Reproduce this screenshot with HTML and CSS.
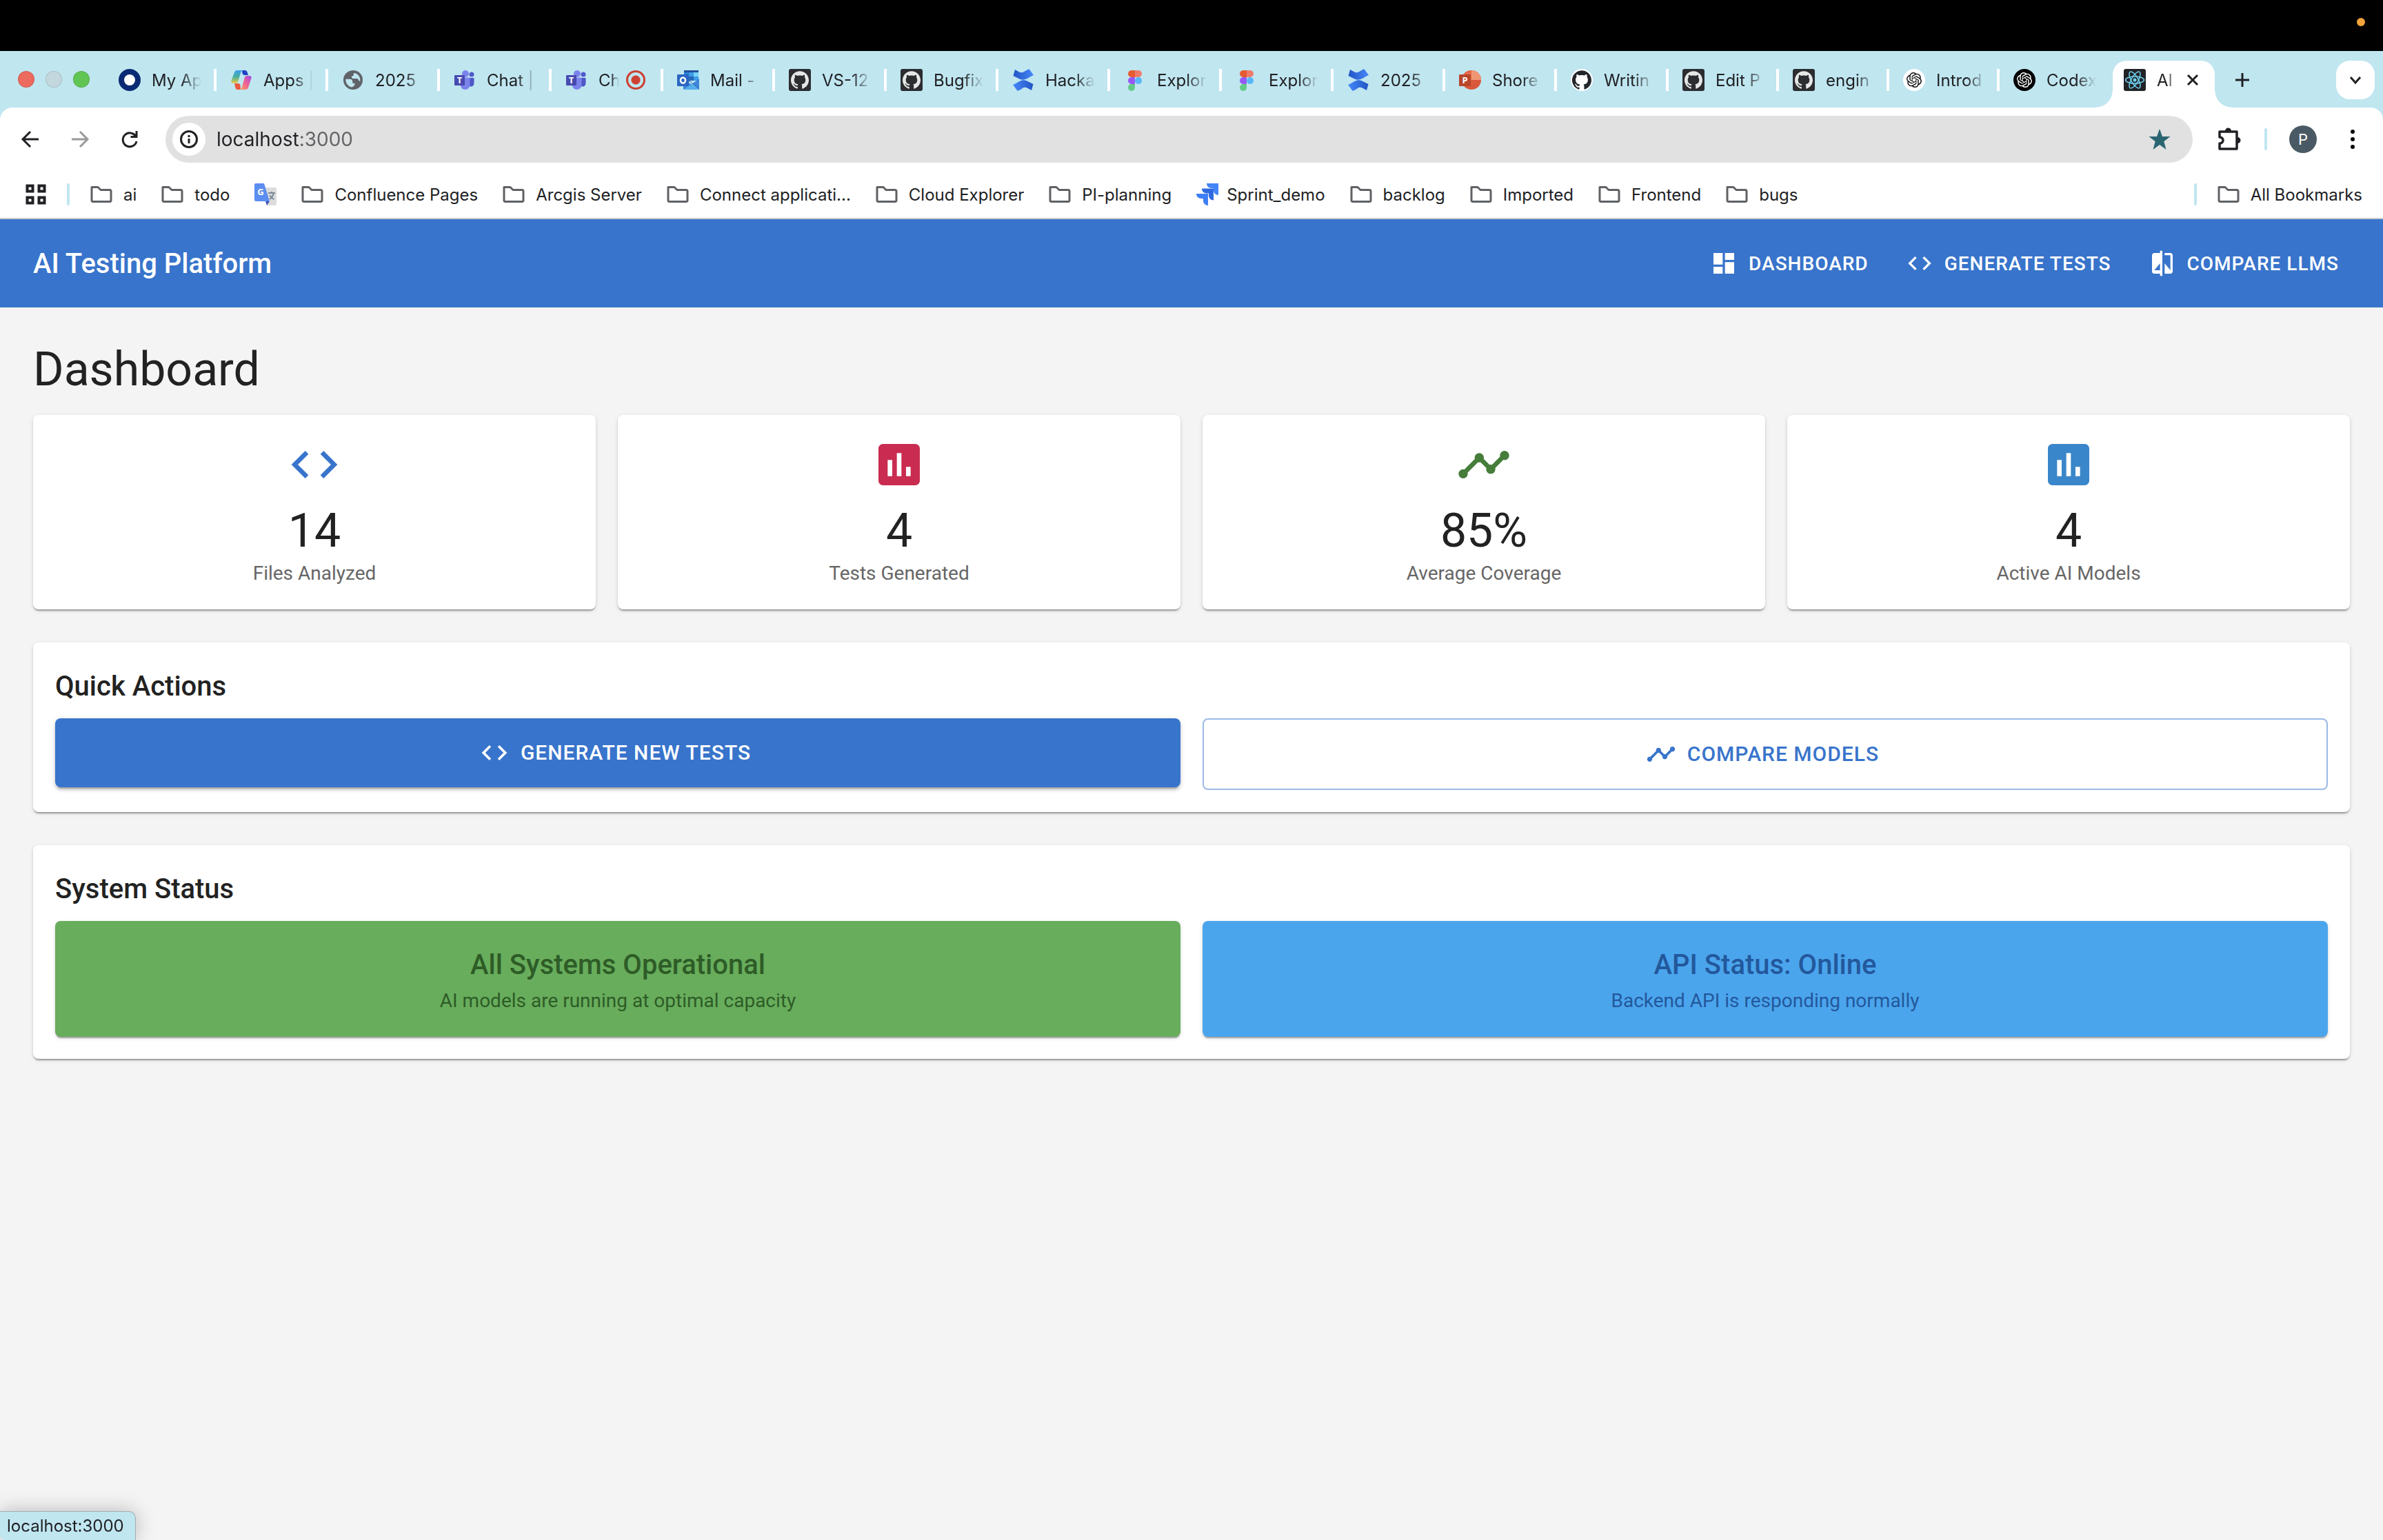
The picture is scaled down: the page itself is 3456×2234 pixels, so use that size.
FILE: index.html
```html
<!DOCTYPE html>
<html lang="en">
<head>
    <meta charset="UTF-8">
    <meta name="viewport" content="width=device-width, initial-scale=1.0">
    <title>AI Testing Platform</title>
    <link rel="stylesheet" href="styles.css">
</head>
<body>
    <!-- icon sprite -->
    <svg class="sprite" aria-hidden="true">
        <defs>
            <linearGradient id="conf-grad" x1="0" y1="0" x2="1" y2="0">
                <stop offset="0" stop-color="#2255c4"/>
                <stop offset="1" stop-color="#4688fa"/>
            </linearGradient>
            <linearGradient id="conf-grad-b" x1="1" y1="0" x2="0" y2="0">
                <stop offset="0" stop-color="#2255c4"/>
                <stop offset="1" stop-color="#4688fa"/>
            </linearGradient>
            <linearGradient id="cop-left" x1="0" y1="0" x2="0" y2="1">
                <stop offset="0" stop-color="#3f9cf0"/>
                <stop offset="0.5" stop-color="#45b0a0"/>
                <stop offset="1" stop-color="#e8c93e"/>
            </linearGradient>
            <linearGradient id="cop-right" x1="1" y1="0" x2="0" y2="1">
                <stop offset="0" stop-color="#a04de8"/>
                <stop offset="0.5" stop-color="#ef6292"/>
                <stop offset="1" stop-color="#f9a65c"/>
            </linearGradient>
        </defs>
        <symbol id="code" viewBox="0 0 24 24"><path d="M9.4 16.6 4.8 12l4.6-4.6L8 6l-6 6 6 6zm5.2 0 4.6-4.6-4.6-4.6L16 6l6 6-6 6z"/></symbol>
        <symbol id="assessment" viewBox="0 0 24 24"><path d="M19 3H5c-1.1 0-2 .9-2 2v14c0 1.1.9 2 2 2h14c1.1 0 2-.9 2-2V5c0-1.1-.9-2-2-2M9 17H7v-7h2zm4 0h-2V7h2zm4 0h-2v-4h2z"/></symbol>
        <symbol id="timeline" viewBox="0 0 24 24"><path d="M23 8c0 1.1-.9 2-2 2-.18 0-.35-.02-.51-.07l-3.56 3.55c.05.16.07.34.07.52 0 1.1-.9 2-2 2s-2-.9-2-2c0-.18.02-.36.07-.52l-2.55-2.55c-.16.05-.34.07-.52.07s-.36-.02-.52-.07l-4.55 4.56c.05.16.07.33.07.51 0 1.1-.9 2-2 2s-2-.9-2-2 .9-2 2-2c.18 0 .35.02.51.07l4.56-4.55C8.02 9.36 8 9.18 8 9c0-1.1.9-2 2-2s2 .9 2 2c0 .18-.02.36-.07.52l2.55 2.55c.16-.05.34-.07.52-.07s.36.02.52.07l3.55-3.56C19.02 8.35 19 8.18 19 8c0-1.1.9-2 2-2s2 .9 2 2"/></symbol>
        <symbol id="dashboard" viewBox="0 0 24 24"><path d="M3 13h8V3H3zm0 8h8v-6H3zm10 0h8V11h-8zm0-18v6h8V3z"/></symbol>
        <symbol id="compare" viewBox="0 0 24 24"><path d="M10 3H5c-1.1 0-2 .9-2 2v14c0 1.1.9 2 2 2h5v2h2V1h-2zm0 15H5l5-6zm9-15h-5v2h5v13l-5-6v9h5c1.1 0 2-.9 2-2V5c0-1.1-.9-2-2-2"/></symbol>

        <symbol id="folder" viewBox="0 0 32 32"><path d="M2 5.500h9l4 4h13a2 2 0 0 1 2 2V25a1.500 1.500 0 0 1-1.500 1.500h-25A1.500 1.500 0 0 1 2 25z" fill="none" stroke="#5f6164" stroke-width="3" stroke-linejoin="round"/></symbol>
        <symbol id="okta" viewBox="0 0 32 32"><circle cx="16" cy="16" r="12" fill="#fff" stroke="#0b2a74" stroke-width="8"/></symbol>
        <symbol id="copilot" viewBox="0 0 32 32">
            <path d="M17 2h4.500c1.500 0 2.500 1 3 2.500L26 9h-5c-2 0-3-1-3.500-2.500z" fill="#2142c4"/>
            <path d="M10 2h9c-2 0-3 1-3.500 2.500L11 18.500C10.500 20 9.500 20.500 8 20.500H4C1.500 20.500 1 18.500 1.500 17L6 5c.7-2 2-3 4-3z" fill="url(#cop-left)"/>
            <path d="M15 30h-4.500c-1.500 0-2.500-1-3-2.500L6 21h5c2 0 3 1 3.500 2.500z" fill="#ea5a3c"/>
            <path d="M22 30h-9c2 0 3-1 3.500-2.500L21 12c.5-1.500 1.500-2 3-2h4c2.500 0 3 2 2.500 3.500L26 27c-.7 2-2 3-4 3z" fill="url(#cop-right)"/>
        </symbol>
        <symbol id="globe" viewBox="0 0 24 24">
            <circle cx="12" cy="12" r="10.500" fill="#5f6368"/>
            <path d="M4 11h4.500a3 3 0 0 1 3 3v1.500H14a4.500 4.500 0 0 1-4 4.300A8 8 0 0 1 4 12zm9.500-6.700a8 8 0 0 1 6.200 9c-.7 0-1.400-.4-1.800-1.300-.5-1.300-1-1.500-2.400-1.500H12c-1 0-1.500-.8-1.500-1.700 0-1 .7-1.300 1.500-1.300h.5V6c0-.8.500-1.300 1-1.700z" fill="#c0e6f0"/>
        </symbol>
        <symbol id="teams" viewBox="0 0 32 32">
            <circle cx="26" cy="8" r="3.500" fill="#5059c9"/>
            <path d="M20 13h9.500v7.500c0 3-2 5-4.500 5s-5-2-5-5z" fill="#4f57c8"/>
            <circle cx="17" cy="7" r="5" fill="#7b83eb"/>
            <path d="M10 12.500h13.500V23c0 4-3 7-7 7s-6.500-3-6.500-7z" fill="#7b83eb"/>
            <rect x="1" y="9" width="15" height="15" rx="1" fill="#474ab0"/>
        </symbol>
        <symbol id="outlook" viewBox="0 0 32 32">
            <path d="M10 2h20a1 1 0 0 1 1 1v14H10z" fill="#2b7fd8"/>
            <path d="M10 2h21v3H10z" fill="#23509c"/>
            <path d="M17 5h7v6h-7z" fill="#3c9be6"/><path d="M24 5h7v6h-7z" fill="#74d3fa"/>
            <path d="M17 11h7v6h-7z" fill="#2667b8"/><path d="M24 11h7v6h-7z" fill="#3c9be6"/>
            <path d="M9 17l12 5 11-8v16H9z" fill="#3f86dc"/>
            <path d="M9 30l12-8h2l9 8z" fill="#56aeea"/>
            <path d="M16 17l5 3 11 9v-1L18 17z" fill="#235ba5"/>
            <rect x="0" y="8" width="17" height="17" rx="1" fill="#2a66c2"/>
            <ellipse cx="8.500" cy="16.500" rx="3.500" ry="4" fill="none" stroke="#fff" stroke-width="2.500"/>
        </symbol>
        <symbol id="octocat" viewBox="0 0 24 24"><path d="M12 .297c-6.63 0-12 5.373-12 12 0 5.303 3.438 9.8 8.205 11.385.6.113.82-.258.82-.577 0-.285-.01-1.04-.015-2.04-3.338.724-4.042-1.61-4.042-1.61C4.422 18.07 3.633 17.7 3.633 17.7c-1.087-.744.084-.729.084-.729 1.205.084 1.838 1.236 1.838 1.236 1.07 1.835 2.809 1.305 3.495.998.108-.776.417-1.305.76-1.605-2.665-.3-5.466-1.332-5.466-5.93 0-1.31.465-2.38 1.235-3.22-.135-.303-.54-1.523.105-3.176 0 0 1.005-.322 3.3 1.23.96-.267 1.98-.399 3-.405 1.02.006 2.04.138 3 .405 2.28-1.552 3.285-1.23 3.285-1.23.645 1.653.24 2.873.12 3.176.765.84 1.23 1.91 1.23 3.22 0 4.61-2.805 5.625-5.475 5.92.42.36.81 1.096.81 2.22 0 1.606-.015 2.896-.015 3.286 0 .315.21.69.825.57C20.565 22.092 24 17.592 24 12.297c0-6.627-5.373-12-12-12"/></symbol>
        <symbol id="github-dark" viewBox="0 0 32 32">
            <rect width="32" height="32" rx="3" fill="#2b2d30"/>
            <use href="#octocat" x="3" y="3" width="26" height="26" fill="#e6e6e6"/>
        </symbol>
        <symbol id="github" viewBox="0 0 32 32">
            <circle cx="16" cy="16" r="16" fill="#fff"/>
            <use href="#octocat" x="2" y="2" width="28" height="28" fill="#22262b"/>
        </symbol>
        <symbol id="confluence" viewBox="0 0 32 32">
            <path d="M4 1l5.500 3c3 1.700 5 1.700 8-.2C20 2.200 22 .8 24.500.200L31 9c-4 1.500-7 4-10.500 5.500-4 1.700-7 1.500-11-.5L1.500 10z" fill="url(#conf-grad)"/>
            <path d="M28 31l-5.500-3c-3-1.700-5-1.700-8 .2C12 29.800 10 31.200 7.500 31.800L1 23c4-1.500 7-4 10.500-5.500 4-1.700 7-1.500 11 .5l8 4z" fill="url(#conf-grad-b)"/>
        </symbol>
        <symbol id="figma" viewBox="0 0 32 32">
            <path d="M11 2h5v10h-5a5 5 0 0 1 0-10z" fill="#e55b32"/>
            <path d="M16 2h5a5 5 0 0 1 0 10h-5z" fill="#ef7b6b"/>
            <path d="M11 12h5v10h-5a5 5 0 0 1 0-10z" fill="#9759f6"/>
            <circle cx="21" cy="17" r="5" fill="#58b7f8"/>
            <path d="M11 22h5v5a5 5 0 1 1-5-5z" fill="#62cb86"/>
        </symbol>
        <symbol id="powerpoint" viewBox="0 0 32 32">
            <circle cx="18" cy="16" r="14" fill="#d9583a"/>
            <path d="M18 2a14 14 0 0 1 14 14H18z" fill="#f19673"/>
            <path d="M18 2a14 14 0 0 0-14 14h14z" fill="#e6694a"/>
            <rect x="0" y="8" width="17" height="17" rx="1" fill="#b9472b"/>
        </symbol>
        <symbol id="openai-mark" viewBox="0 0 24 24"><path d="M22.2819 9.8211a5.9847 5.9847 0 0 0-.5157-4.9108 6.0462 6.0462 0 0 0-6.5098-2.9A6.0651 6.0651 0 0 0 4.9807 4.1818a5.9847 5.9847 0 0 0-3.9977 2.9 6.0462 6.0462 0 0 0 .7427 7.0966 5.98 5.98 0 0 0 .511 4.9107 6.051 6.051 0 0 0 6.5146 2.9001A5.9847 5.9847 0 0 0 13.2599 24a6.0557 6.0557 0 0 0 5.7718-4.2058 5.9894 5.9894 0 0 0 3.9977-2.9001 6.0557 6.0557 0 0 0-.7475-7.0729zm-9.022 12.6081a4.4755 4.4755 0 0 1-2.8764-1.0408l.1419-.0804 4.7783-2.7582a.7948.7948 0 0 0 .3927-.6813v-6.7369l2.02 1.1686a.071.071 0 0 1 .038.052v5.5826a4.504 4.504 0 0 1-4.4945 4.4944zm-9.6607-4.1254a4.4708 4.4708 0 0 1-.5346-3.0137l.142.0852 4.783 2.7582a.7712.7712 0 0 0 .7806 0l5.8428-3.3685v2.3324a.0804.0804 0 0 1-.0332.0615L9.74 19.9502a4.4992 4.4992 0 0 1-6.1408-1.6464zM2.3408 7.8956a4.485 4.485 0 0 1 2.3655-1.9728V11.6a.7664.7664 0 0 0 .3879.6765l5.8144 3.3543-2.0201 1.1685a.0757.0757 0 0 1-.071 0l-4.8303-2.7865A4.504 4.504 0 0 1 2.3408 7.872zm16.5963 3.8558L13.1038 8.364 15.1192 7.2a.0757.0757 0 0 1 .071 0l4.8303 2.7913a4.4944 4.4944 0 0 1-.6765 8.1042v-5.6772a.79.79 0 0 0-.407-.667zm2.0107-3.0231l-.142-.0852-4.7735-2.7818a.7759.7759 0 0 0-.7854 0L9.409 9.2297V6.8974a.0662.0662 0 0 1 .0284-.0615l4.8303-2.7866a4.4992 4.4992 0 0 1 6.6802 4.66zM8.3065 12.863l-2.02-1.1638a.0804.0804 0 0 1-.038-.0567V6.0742a4.4992 4.4992 0 0 1 7.3757-3.4537l-.142.0805L8.704 5.459a.7948.7948 0 0 0-.3927.6813zm1.0976-2.3654l2.602-1.4998 2.6069 1.4998v2.9994l-2.5974 1.4997-2.6067-1.4997Z"/></symbol>
        <symbol id="openai" viewBox="0 0 32 32">
            <circle cx="16" cy="16" r="16" fill="#fff"/>
            <use href="#openai-mark" x="5" y="5" width="22" height="22" fill="#111"/>
        </symbol>
        <symbol id="openai-dark" viewBox="0 0 32 32">
            <circle cx="16" cy="16" r="16" fill="#000"/>
            <use href="#openai-mark" x="5" y="5" width="22" height="22" fill="#fff"/>
        </symbol>
        <symbol id="react" viewBox="0 0 32 32">
            <rect width="32" height="32" rx="3" fill="#222326"/>
            <g fill="none" stroke="#6fd3f2" stroke-width="1.500">
                <ellipse cx="16" cy="16" rx="13.500" ry="5"/>
                <ellipse cx="16" cy="16" rx="13.500" ry="5" transform="rotate(60 16 16)"/>
                <ellipse cx="16" cy="16" rx="13.500" ry="5" transform="rotate(120 16 16)"/>
            </g>
            <circle cx="16" cy="16" r="2.500" fill="#6fd3f2"/>
        </symbol>
        <symbol id="translate" viewBox="0 0 32 32">
            <path d="M14 6h16a2 2 0 0 1 2 2v22a2 2 0 0 1-2 2H18z" fill="#dcdcdc"/>
            <path d="M16 26h6l-4 6z" fill="#4150b5"/>
            <path d="M2 0h12l8 26H2a2 2 0 0 1-2-2V2a2 2 0 0 1 2-2z" fill="#5c8df0"/>
            <path d="M20 14h10M25 12v2M28 14c-1 4-3 7-6 9M22.500 17c1 3 3 5 6 6" fill="none" stroke="#7a8a96" stroke-width="2"/>
        </symbol>
        <symbol id="jira" viewBox="0 0 32 32">
            <path d="M15 0h17v17c-4 0-7-3-7-7V7h-3c-4 0-7-3-7-7z" fill="#4384f8"/>
            <path d="M8 7.500h17v17c-4 0-7-3-7-7v-3h-3c-4 0-7-3-7-7z" fill="#316ae0"/>
            <path d="M0 15h17v17c-4 0-7-3-7-7v-3H7c-4 0-7-3-7-7z" fill="#3f7ff5"/>
        </symbol>
    </svg>

    <div class="menubar"><span class="mic-dot"></span></div>

    <div class="tabstrip">
        <div class="lights"><span class="light red"></span><span class="light grey"></span><span class="light green"></span></div>
        <nav class="tabs">
            <a href="#" class="tab"><svg><use href="#okta"/></svg><span>My Ap</span></a>
            <a href="#" class="tab"><svg><use href="#copilot"/></svg><span>Apps |</span></a>
            <a href="#" class="tab"><svg><use href="#globe"/></svg><span>2025</span></a>
            <a href="#" class="tab"><svg><use href="#teams"/><text x="8.500" y="21" class="glyph">T</text></svg><span>Chat |</span></a>
            <a href="#" class="tab recording"><svg><use href="#teams"/><text x="8.500" y="21" class="glyph">T</text></svg><span>Ch</span><i class="rec"></i></a>
            <a href="#" class="tab"><svg><use href="#outlook"/></svg><span>Mail -</span></a>
            <a href="#" class="tab"><svg><use href="#github-dark"/></svg><span>VS-12</span></a>
            <a href="#" class="tab"><svg><use href="#github-dark"/></svg><span>Bugfix</span></a>
            <a href="#" class="tab"><svg><use href="#confluence"/></svg><span>Hacka</span></a>
            <a href="#" class="tab"><svg><use href="#figma"/></svg><span>Explor</span></a>
            <a href="#" class="tab"><svg><use href="#figma"/></svg><span>Explor</span></a>
            <a href="#" class="tab"><svg><use href="#confluence"/></svg><span>2025</span></a>
            <a href="#" class="tab"><svg><use href="#powerpoint"/><text x="8.500" y="21" class="glyph">P</text></svg><span>Shore</span></a>
            <a href="#" class="tab"><svg><use href="#github"/></svg><span>Writin</span></a>
            <a href="#" class="tab narrow"><svg><use href="#github-dark"/></svg><span>Edit P</span></a>
            <a href="#" class="tab narrow"><svg><use href="#github-dark"/></svg><span>engin</span></a>
            <a href="#" class="tab narrow"><svg><use href="#openai"/></svg><span>Introd</span></a>
            <a href="#" class="tab narrow last"><svg><use href="#openai-dark"/></svg><span>Codex</span></a>
            <div class="tab-active">
                <svg><use href="#react"/></svg><span>AI</span>
                <button type="button" aria-label="Close tab"><svg viewBox="0 0 20 20"><path d="M3 3l14 14M17 3L3 17"/></svg></button>
            </div>
        </nav>
        <button type="button" class="new-tab" aria-label="New tab"><svg viewBox="0 0 20 20"><path d="M10 0v20M0 10h20"/></svg></button>
        <button type="button" class="tab-search" aria-label="Search tabs"><svg viewBox="0 0 20 20"><path d="M3 6l7 8 7-8"/></svg></button>
    </div>

    <div class="chrome">
        <div class="toolbar">
            <button type="button" class="tool" aria-label="Back"><svg viewBox="0 0 24 24"><path d="M24 12H2M12 1L1 12l11 11"/></svg></button>
            <button type="button" class="tool dim" aria-label="Forward"><svg viewBox="0 0 24 24"><path d="M0 12h22M12 1l11 11-11 11"/></svg></button>
            <button type="button" class="tool" aria-label="Reload"><svg viewBox="0 0 24 24"><path d="M21 8a10 10 0 1 0 1 7M22 0v8.500h-8.500"/></svg></button>
            <div class="omnibox">
                <span class="site-info"><svg viewBox="0 0 26 26"><circle cx="13" cy="13" r="11.500"/><path d="M13 12v7M13 7v3"/></svg></span>
                <input type="text" value="localhost:3000" aria-label="Address">
                <svg class="star" viewBox="0 0 32 32"><path d="M16 1l4 11h11.500l-9.200 7.200L25.500 31 16 24l-9.500 7 3.200-11.800L.5 12H12z"/></svg>
            </div>
            <button type="button" class="extensions" aria-label="Extensions"><svg viewBox="0 0 34 34"><path d="M3 6h25v25H3v-8c3 0 5-2 5-4.500S6 14 3 14z" fill="none" stroke="#202124" stroke-width="3.500" stroke-linejoin="round"/><path d="M11 5a4 4 0 0 1 9 0zM29 14a4.500 4.500 0 0 1 0 9z" fill="#202124"/></svg></button>
            <span class="divider"></span>
            <button type="button" class="avatar">P</button>
            <button type="button" class="menu" aria-label="Menu"><svg viewBox="0 0 8 28"><circle cx="4" cy="3" r="3"/><circle cx="4" cy="14" r="3"/><circle cx="4" cy="25" r="3"/></svg></button>
        </div>
        <div class="bookmarks">
            <svg class="apps-grid" viewBox="0 0 30 30"><path d="M2.500 2.500h8v8h-8zM19.500 2.500h8v8h-8zM2.500 19.500h8v8h-8zM19.500 19.500h8v8h-8z"/></svg>
            <span class="divider"></span>
            <a href="#"><svg><use href="#folder"/></svg>ai</a>
            <a href="#"><svg><use href="#folder"/></svg>todo</a>
            <a href="#" aria-label="Translate"><svg><use href="#translate"/><text x="9" y="17" class="glyph">G</text></svg></a>
            <a href="#"><svg><use href="#folder"/></svg>Confluence Pages</a>
            <a href="#"><svg><use href="#folder"/></svg>Arcgis Server</a>
            <a href="#"><svg><use href="#folder"/></svg>Connect applicati...</a>
            <a href="#"><svg><use href="#folder"/></svg>Cloud Explorer</a>
            <a href="#"><svg><use href="#folder"/></svg>PI-planning</a>
            <a href="#" class="site"><svg><use href="#jira"/></svg>Sprint_demo</a>
            <a href="#"><svg><use href="#folder"/></svg>backlog</a>
            <a href="#"><svg><use href="#folder"/></svg>Imported</a>
            <a href="#"><svg><use href="#folder"/></svg>Frontend</a>
            <a href="#"><svg><use href="#folder"/></svg>bugs</a>
            <span class="divider push"></span>
            <a href="#"><svg><use href="#folder"/></svg>All Bookmarks</a>
        </div>
    </div>

    <header class="appbar">
        <div class="brand">AI Testing Platform</div>
        <nav>
            <a href="/"><svg><use href="#dashboard"/></svg>DASHBOARD</a>
            <a href="/generate"><svg><use href="#code"/></svg>GENERATE TESTS</a>
            <a href="/compare"><svg><use href="#compare"/></svg>COMPARE LLMS</a>
        </nav>
    </header>

    <main>
        <h1>Dashboard</h1>

        <div class="stats">
            <div class="card stat">
                <svg class="primary"><use href="#code"/></svg>
                <div class="value">14</div>
                <div class="label">Files Analyzed</div>
            </div>
            <div class="card stat">
                <svg class="secondary"><use href="#assessment"/></svg>
                <div class="value">4</div>
                <div class="label">Tests Generated</div>
            </div>
            <div class="card stat">
                <svg class="success"><use href="#timeline"/></svg>
                <div class="value">85%</div>
                <div class="label">Average Coverage</div>
            </div>
            <div class="card stat">
                <svg class="info"><use href="#assessment"/></svg>
                <div class="value">4</div>
                <div class="label">Active AI Models</div>
            </div>
        </div>

        <section class="card panel">
            <h2>Quick Actions</h2>
            <div class="row">
                <button type="button" class="btn contained"><svg><use href="#code"/></svg>GENERATE NEW TESTS</button>
                <button type="button" class="btn outlined"><svg><use href="#timeline"/></svg>COMPARE MODELS</button>
            </div>
        </section>

        <section class="card panel">
            <h2>System Status</h2>
            <div class="row">
                <div class="card status ok">
                    <h3>All Systems Operational</h3>
                    <p>AI models are running at optimal capacity</p>
                </div>
                <div class="card status api">
                    <h3>API Status: Online</h3>
                    <p>Backend API is responding normally</p>
                </div>
            </div>
        </section>
    </main>

    <div class="link-status">localhost:3000</div>
</body>
</html>
```
FILE: styles.css
```css
* {
    box-sizing: border-box;
}
body {
    margin: 0;
    min-height: 100vh;
    background-color: #f4f4f4;
    color: #222;
    font-family: Roboto, "Liberation Sans", sans-serif;
}
a {
    color: inherit;
    text-decoration: none;
}
button {
    padding: 0;
    border: none;
    background: none;
    font-family: inherit;
    cursor: pointer;
}
svg {
    flex: none;
    fill: currentColor;
}
.sprite {
    position: absolute;
    width: 0;
    height: 0;
}
.glyph {
    font: bold 13px "Open Sans", sans-serif;
    fill: #fff;
    text-anchor: middle;
}

/* browser window */
.menubar {
    display: flex;
    justify-content: flex-end;
    height: 74px;
    padding: 26px 26px 0 0;
    background-color: #000;
}
.mic-dot {
    width: 12px;
    height: 12px;
    border-radius: 50%;
    background-color: #f2a33c;
}
.tabstrip {
    display: flex;
    align-items: flex-end;
    height: 82px;
    padding: 0 12px 0 26px;
    background-color: #c0e6f0;
    color: #202124;
    font-family: Inter, "Liberation Sans", sans-serif;
    font-size: 24px;
}
.lights {
    display: flex;
    gap: 16px;
    width: 126px;
    padding-bottom: 29px;
}
.light {
    width: 24px;
    height: 24px;
    border-radius: 50%;
    border: 1px solid rgba(0, 0, 0, 0.12);
}
.red {
    background-color: #ed6a5e;
}
.grey {
    background-color: #c3d8de;
}
.green {
    background-color: #61c554;
}
.tabs {
    display: flex;
    align-items: flex-end;
}
.tab {
    display: flex;
    align-items: center;
    gap: 16px;
    width: 162px;
    height: 32px;
    margin-bottom: 24px;
    padding-left: 20px;
    border-right: 4px solid #fff;
}
.tab.narrow {
    width: 160px;
}
.tab.last {
    border-right-color: transparent;
}
.tab svg,
.tab-active > svg {
    width: 32px;
    height: 32px;
}
.tab span {
    width: 72px;
    white-space: nowrap;
    -webkit-mask-image: linear-gradient(to right, #000 60%, transparent);
    mask-image: linear-gradient(to right, #000 60%, transparent);
}
.tab.recording {
    gap: 10px;
}
.tab.recording svg {
    margin-right: 6px;
}
.tab.recording span {
    width: 30px;
}
.rec {
    width: 28px;
    height: 28px;
    border: 3px solid #cd4032;
    border-radius: 50%;
    background: radial-gradient(#cd4032 6px, transparent 7px);
}
.tab-active {
    position: relative;
    display: flex;
    align-items: center;
    width: 148px;
    height: 68px;
    margin: 0 4px;
    padding: 0 22px 12px 16px;
    border-radius: 20px 20px 0 0;
    background-color: #fff;
}
.tab-active::before,
.tab-active::after {
    content: "";
    position: absolute;
    bottom: 0;
    width: 24px;
    height: 24px;
}
.tab-active::before {
    right: 100%;
    background: radial-gradient(circle at 0 0, transparent 23px, #fff 24px);
}
.tab-active::after {
    left: 100%;
    background: radial-gradient(circle at 100% 0, transparent 23px, #fff 24px);
}
.tab-active span {
    width: 26px;
    margin: 0 auto 0 16px;
    -webkit-mask-image: linear-gradient(to right, #000 60%, transparent);
    mask-image: linear-gradient(to right, #000 60%, transparent);
}
.tab-active button {
    display: flex;
}
.tab-active button svg,
.new-tab svg,
.tab-search svg {
    width: 20px;
    height: 20px;
    fill: none;
    stroke: #202124;
    stroke-width: 3;
}
.new-tab {
    display: flex;
    margin: 0 auto 30px 26px;
}
.tab-search {
    display: flex;
    align-items: center;
    justify-content: center;
    width: 56px;
    height: 56px;
    margin-bottom: 12px;
    border-radius: 20px;
    background-color: #fff;
}
.chrome {
    background: linear-gradient(#c0e6f0 24px, #fff 24px);
    color: #202124;
    font-family: Inter, "Liberation Sans", sans-serif;
    border-bottom: 2px solid #c9cbcd;
}
.toolbar {
    display: flex;
    align-items: center;
    height: 92px;
    padding: 0 40px 0 32px;
    border-radius: 18px 18px 0 0;
    background-color: #fff;
}
.tool {
    display: flex;
    margin-right: 48px;
}
.tool svg {
    width: 24px;
    height: 24px;
    fill: none;
    stroke: #202124;
    stroke-width: 3;
    overflow: visible;
}
.dim {
    opacity: 0.45;
}
.omnibox {
    display: flex;
    align-items: center;
    flex: 1;
    height: 68px;
    margin-right: 36px;
    margin-left: -8px;
    padding: 0 32px 0 10px;
    border-radius: 34px;
    background-color: #e1e1e1;
}
.site-info {
    display: flex;
    align-items: center;
    justify-content: center;
    width: 48px;
    height: 48px;
    border-radius: 50%;
    background-color: #fff;
}
.site-info svg {
    width: 26px;
    height: 26px;
    fill: none;
    stroke: #202124;
    stroke-width: 3;
}
/* host is dark, port is greyed */
.omnibox input {
    flex: 1;
    margin-left: 16px;
    padding: 0;
    border: none;
    outline: none;
    background: linear-gradient(to right, #202124 122px, #626366 122px);
    -webkit-background-clip: text;
    background-clip: text;
    color: transparent;
    font-family: inherit;
    font-size: 28px;
}
.star {
    width: 32px;
    height: 32px;
    fill: #2a6672;
}
.extensions {
    display: flex;
}
.extensions svg {
    width: 34px;
    height: 34px;
}
.divider {
    width: 4px;
    height: 32px;
    border-radius: 2px;
    background-color: #c0e6f0;
}
.toolbar .divider {
    margin: 0 32px 0 34px;
}
.avatar {
    width: 40px;
    height: 40px;
    border-radius: 50%;
    background-color: #4a5a64;
    color: #fff;
    font-size: 22px;
}
.menu {
    display: flex;
    margin-left: 48px;
}
.menu svg {
    width: 8px;
    height: 28px;
}
.bookmarks {
    display: flex;
    align-items: center;
    gap: 36px;
    height: 68px;
    padding: 0 30px 0 37px;
    background-color: #fff;
    font-size: 24px;
    white-space: nowrap;
}
.bookmarks a {
    display: flex;
    align-items: center;
    gap: 16px;
}
.bookmarks a svg {
    width: 32px;
    height: 32px;
}
.bookmarks .site {
    gap: 12px;
}
.bookmarks .apps-grid {
    width: 30px;
    height: 30px;
    margin-right: -6px;
    fill: none;
    stroke: #202124;
    stroke-width: 4;
}
.bookmarks .divider {
    margin-right: -6px;
}
.bookmarks .push {
    margin-left: auto;
}

/* app */
.appbar {
    display: flex;
    align-items: center;
    justify-content: space-between;
    height: 128px;
    padding: 0 48px;
    background-color: #3874cb;
    color: #fff;
    font-weight: 500;
}
.brand {
    font-size: 40px;
}
.appbar nav {
    display: flex;
    gap: 30px;
}
.appbar a {
    display: flex;
    align-items: center;
    gap: 16px;
    padding: 12px 16px 12px 8px;
    font-size: 28px;
    letter-spacing: 1px;
}
.appbar a svg {
    width: 40px;
    height: 40px;
}
main {
    padding: 48px;
}
h1 {
    margin: 0 0 24px;
    font-size: 68px;
    font-weight: 400;
    line-height: 84px;
}
h2, h3 {
    margin: 0;
    font-size: 40px;
    font-weight: 500;
    line-height: 64px;
}
.card {
    border-radius: 8px;
    background-color: #fff;
    box-shadow: 0 4px 2px -2px rgba(0, 0, 0, 0.2), 0 2px 2px rgba(0, 0, 0, 0.14), 0 2px 6px rgba(0, 0, 0, 0.12);
}
.stats {
    display: grid;
    grid-template-columns: repeat(4, 1fr);
    gap: 32px;
    margin-bottom: 48px;
}
.stat {
    display: flex;
    flex-direction: column;
    align-items: center;
    padding: 32px;
}
.stat svg {
    width: 80px;
    height: 80px;
    margin-bottom: 14px;
}
.primary {
    color: #3874cb;
}
.secondary {
    color: #c92c50;
}
.success {
    color: #467d3a;
}
.info {
    color: #3a86ca;
}
.value {
    font-size: 68px;
    line-height: 84px;
}
.label {
    color: #666;
    font-size: 28px;
    line-height: 40px;
}
.panel {
    margin-bottom: 48px;
    padding: 32px;
}
.panel h2 {
    margin-bottom: 14px;
}
.row {
    display: grid;
    grid-template-columns: 1fr 1fr;
    align-items: start;
    gap: 32px;
}
.btn {
    display: flex;
    align-items: center;
    justify-content: center;
    gap: 16px;
    padding: 24px 44px 24px 36px;
    border-radius: 8px;
    font-size: 30px;
    font-weight: 500;
    line-height: 52px;
    letter-spacing: 1px;
}
.btn svg {
    width: 44px;
    height: 44px;
}
.contained {
    background-color: #3874cb;
    color: #fff;
    box-shadow: 0 6px 2px -4px rgba(0, 0, 0, 0.2), 0 4px 4px rgba(0, 0, 0, 0.14), 0 2px 10px rgba(0, 0, 0, 0.12);
}
.outlined {
    border: 2px solid #9bb9e5;
    color: #3874cb;
}
.status {
    padding: 32px;
    text-align: center;
}
.status p {
    margin: 0;
    font-size: 28px;
    line-height: 40px;
}
.ok {
    background-color: #68ad5c;
    color: #2e5c27;
}
.api {
    background-color: #4ba5ed;
    color: #23589c;
}

/* hovered link bubble */
.link-status {
    position: fixed;
    bottom: 0;
    left: 0;
    padding: 6px 16px 6px 10px;
    border: 1px solid #a9abad;
    border-width: 1px 1px 0 0;
    border-radius: 0 10px 0 8px;
    background-color: #c0e6f0;
    box-shadow: 0 0 28px rgba(0, 0, 0, 0.25);
    color: #202124;
    font-family: Inter, "Liberation Sans", sans-serif;
    font-size: 24px;
    line-height: 29px;
}
```
